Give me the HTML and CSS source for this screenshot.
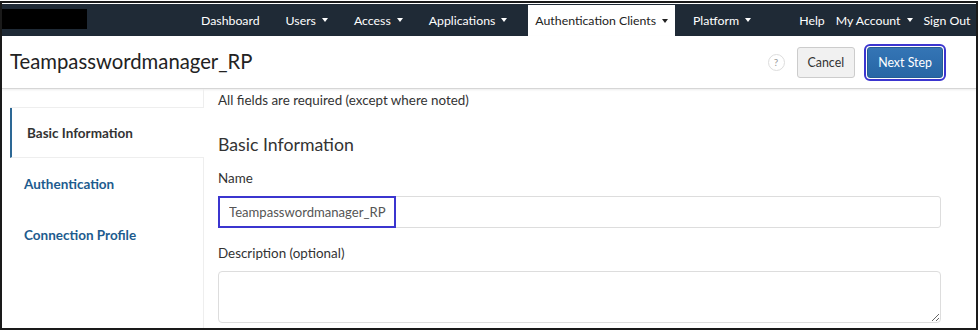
FILE: index.html
```html
<!DOCTYPE html>
<html lang="en">
<head>
    <meta charset="UTF-8">
    <meta name="viewport" content="width=device-width, initial-scale=1.0">
    <title>Teampasswordmanager_RP</title>
    <link rel="stylesheet" href="styles.css">
</head>
<body>
    <div class="frame">
        <nav class="navbar">
            <div class="logo"></div>
            <ul class="menu">
                <li class="item">Dashboard</li>
                <li class="item">Users<span class="caret"></span></li>
                <li class="item">Access<span class="caret"></span></li>
                <li class="item">Applications<span class="caret"></span></li>
                <li class="item active">Authentication Clients<span class="caret"></span></li>
                <li class="item">Platform<span class="caret"></span></li>
            </ul>
            <ul class="menu right">
                <li class="item">Help</li>
                <li class="item">My Account<span class="caret"></span></li>
                <li class="item">Sign Out</li>
            </ul>
        </nav>

        <header class="page-head">
            <h1>Teampasswordmanager_RP</h1>
            <div class="actions">
                <span class="help">?</span>
                <button class="btn">Cancel</button>
                <button class="btn primary">Next Step</button>
            </div>
        </header>

        <div class="main">
            <aside class="steps">
                <div class="steps-top"></div>
                <div class="step current">Basic Information</div>
                <div class="step">Authentication</div>
                <div class="step">Connection Profile</div>
                <div class="steps-rest"></div>
            </aside>
            <section class="form">
                <p class="note">All fields are required (except where noted)</p>
                <h3>Basic Information</h3>
                <label for="cname">Name</label>
                <div class="field">
                    <input type="text" id="cname" value="Teampasswordmanager_RP" />
                    <span class="mark"></span>
                </div>
                <label for="cdesc" class="second">Description (optional)</label>
                <textarea id="cdesc"></textarea>
            </section>
        </div>
    </div>
</body>
</html>
```

FILE: styles.css
```css
* {
    box-sizing: border-box;
}

body {
    margin: 0;
    padding-top: 1px;
    font-family: Lato, "Open Sans", sans-serif;
    color: #333;
    background-color: #fff;
}

.frame {
    width: 978px;
    height: 329px;
    border: 2px solid #1a1a1a;
    padding-top: 1px;
    overflow: hidden;
    display: flex;
    flex-direction: column;
}

/* top navigation */
.navbar {
    height: 32px;
    background-color: #1f2a36;
    display: flex;
    align-items: stretch;
    font-size: 12.3px;
    color: #fff;
}

.logo {
    width: 85px;
    height: 20px;
    margin-top: 5px;
    background-color: #000;
}

.menu {
    list-style: none;
    margin: 0 0 0 101px;
    padding: 0;
    display: flex;
}

.menu.right {
    margin-left: auto;
    margin-right: 0;
}

.item {
    display: flex;
    align-items: center;
    padding: 0 13px;
    white-space: nowrap;
}

.menu.right .item {
    padding: 0 5.5px;
}

.item.active {
    background-color: #fff;
    color: #222;
    padding: 0 7px;
    margin: 1px 5px 0 8px;
}

.caret {
    display: inline-block;
    margin-left: 6px;
    border-top: 4px solid currentColor;
    border-left: 3px solid transparent;
    border-right: 3px solid transparent;
}

/* page header */
.page-head {
    height: 53px;
    display: flex;
    align-items: center;
    justify-content: space-between;
    padding: 0 33px 0 8px;
    border-bottom: 1px solid #d6d6d6;
    box-shadow: 0 1px 2px rgba(0, 0, 0, 0.08);
}

h1 {
    margin: 0 0 2px 0;
    font-size: 20.3px;
    font-weight: normal;
    color: #222;
}

.actions {
    display: flex;
    align-items: center;
}

.help {
    width: 17px;
    height: 17px;
    border: 1px solid #ddd;
    border-radius: 50%;
    font-size: 10px;
    color: #999;
    display: flex;
    align-items: center;
    justify-content: center;
    margin-right: 12px;
}

.btn {
    font-family: Lato, sans-serif;
    font-size: 12.4px;
    height: 31px;
    padding: 0 10px;
    border: 1px solid #ccc;
    border-radius: 3px;
    background-color: #f1f1f1;
    color: #333;
}

.btn.primary {
    margin-left: 12px;
    padding: 0 10px;
    color: #fff;
    border-color: #245d94;
    background: linear-gradient(#3475b5, #2766a5);
    outline: 2px solid #3b35cf;
    outline-offset: 1px;
}

/* body */
.main {
    flex: 1;
    display: flex;
    padding-left: 8px;
}

.steps {
    width: 194px;
    display: flex;
    flex-direction: column;
}

.steps-top {
    height: 19px;
    border-right: 1px solid #eee;
    border-bottom: 1px solid #eee;
}

.step {
    height: 51px;
    display: flex;
    align-items: center;
    padding-left: 14px;
    font-size: 13.5px;
    font-weight: bold;
    color: #1d5b8e;
    border-right: 1px solid #eee;
}

.step.current {
    height: 50px;
    color: #333;
    border-left: 2px solid #2d6895;
    border-right: none;
    border-bottom: 1px solid #eee;
    padding-left: 15px;
}

.steps-rest {
    flex: 1;
    border-right: 1px solid #eee;
}

.form {
    flex: 1;
    padding: 1px 35px 0 14px;
    font-size: 13.4px;
}

.note {
    margin: 0;
    line-height: 20px;
}

h3 {
    margin: 23px 0 0 0;
    font-size: 17.7px;
    line-height: 24px;
    font-weight: normal;
}

label {
    display: block;
    margin-top: 11px;
    line-height: 20px;
}

label.second {
    margin-top: 15px;
}

.field {
    position: relative;
    margin-top: 8px;
}

input,
textarea {
    display: block;
    width: 100%;
    border: 1px solid #ddd;
    border-radius: 3px;
    font-family: Lato, sans-serif;
    font-size: 13.1px;
    color: #555;
}

input {
    height: 32px;
    padding: 0 10px;
}

textarea {
    margin-top: 8px;
    height: 52px;
    border-radius: 4px;
}

/* highlight box drawn over the name value */
.mark {
    position: absolute;
    left: 0;
    top: 0;
    width: 178px;
    height: 32px;
    border: 2px solid #3b35cf;
}
```
